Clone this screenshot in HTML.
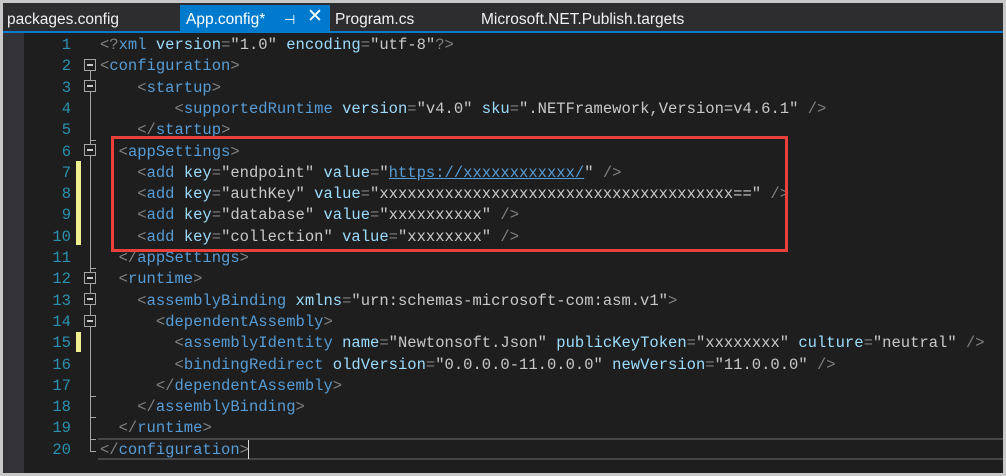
<!DOCTYPE html>
<html><head><meta charset="utf-8"><style>
*{margin:0;padding:0;box-sizing:border-box}
body{width:1006px;height:476px;background:#c8c8c8;position:relative;overflow:hidden}
#tabs{position:absolute;left:3px;top:3px;width:1000px;height:28px;background:#2d2d30}
.tab{position:absolute;top:9px;font:15.5px "Liberation Sans",sans-serif;color:#f1f1f1;line-height:22px}
#blue{position:absolute;left:3px;top:31px;width:1000px;height:2px;background:#007acc}
#act{position:absolute;left:180px;top:5px;width:150px;height:27px;background:#007acc}
#ed{position:absolute;left:3px;top:33px;width:1000px;height:440px;background:#1e1e1e}
#lb{position:absolute;left:3px;top:33px;width:21px;height:440px;background:#333337}
.ln{position:absolute;left:30px;width:41px;text-align:right;color:#2b91af;font:15.52px "Liberation Mono",monospace;height:21.3px;line-height:21.3px;margin-top:1px}
.c{position:absolute;left:100px;white-space:pre;font:15.52px "Liberation Mono",monospace;line-height:21.3px;height:21.3px;color:#c8c8c8;margin-top:1px}
.t{color:#569cd6}.a{color:#9cdcfe}.p{color:#808080}.s{color:#c8c8c8}.u{color:#569cd6;text-decoration:underline}
.fb{position:absolute;left:84px;width:12px;height:12px;border:1px solid #a5a5a5;background:#1e1e1e}
.fb::after{content:"";position:absolute;left:2px;top:4px;width:6px;height:2px;background:#c8c8c8}
.ym{position:absolute;left:76px;width:5px;background:#efef8f}
</style></head><body>
<div id="tabs"></div>
<div id="act"></div>
<div class="tab" style="left:7px">packages.config</div>
<div class="tab" style="left:186px;color:#fff">App.config*</div>
<div class="tab" style="left:284px;color:#fff;font-size:13px">⊣</div>
<div class="tab" style="left:307px;top:6px;color:#fff;font-size:19px">✕</div>
<div class="tab" style="left:335px">Program.cs</div>
<div class="tab" style="left:481px">Microsoft.NET.Publish.targets</div>
<div id="blue"></div>
<div id="ed"></div>
<div id="lb"></div>
<div style="position:absolute;left:98px;top:438px;width:905px;height:22px;border-top:2px solid #464646;border-bottom:2px solid #464646"></div>
<div style="position:absolute;left:90px;top:62px;width:1px;height:390px;background:#a5a5a5"></div>
<div style="position:absolute;left:90px;top:451px;width:6px;height:1px;background:#a5a5a5"></div>
<div style="position:absolute;left:90px;top:396px;width:6px;height:1px;background:#a5a5a5"></div>
<div style="position:absolute;left:90px;top:417px;width:6px;height:1px;background:#a5a5a5"></div>
<div style="position:absolute;left:90px;top:439px;width:6px;height:1px;background:#a5a5a5"></div>
<div style="position:absolute;left:90px;top:140px;width:6px;height:1px;background:#a5a5a5"></div>
<div style="position:absolute;left:90px;top:268px;width:6px;height:1px;background:#a5a5a5"></div>
<div class="fb" style="top:59px"></div>
<div class="fb" style="top:80px"></div>
<div class="fb" style="top:144px"></div>
<div class="fb" style="top:272px"></div>
<div class="fb" style="top:293px"></div>
<div class="fb" style="top:315px"></div>
<div class="ym" style="top:161px;height:84px"></div>
<div class="ym" style="top:332px;height:20px"></div>
<div class="ln" style="top:34px">1</div><div class="ln" style="top:55.3px">2</div><div class="ln" style="top:76.6px">3</div><div class="ln" style="top:97.9px">4</div><div class="ln" style="top:119.2px">5</div><div class="ln" style="top:140.5px">6</div><div class="ln" style="top:161.8px">7</div><div class="ln" style="top:183.1px">8</div><div class="ln" style="top:204.4px">9</div><div class="ln" style="top:225.7px">10</div><div class="ln" style="top:247px">11</div><div class="ln" style="top:268.3px">12</div><div class="ln" style="top:289.6px">13</div><div class="ln" style="top:310.9px">14</div><div class="ln" style="top:332.2px">15</div><div class="ln" style="top:353.5px">16</div><div class="ln" style="top:374.8px">17</div><div class="ln" style="top:396.1px">18</div><div class="ln" style="top:417.4px">19</div><div class="ln" style="top:438.7px">20</div>
<div class="c" style="top:34px"><span class="p">&lt;?</span><span class="t">xml</span> <span class="a">version</span><span class="p">=</span>"<span class="s">1.0</span>" <span class="a">encoding</span><span class="p">=</span>"utf-8"<span class="p">?&gt;</span></div>
<div class="c" style="top:55.3px"><span class="p">&lt;</span><span class="t">configuration</span><span class="p">&gt;</span></div>
<div class="c" style="top:76.6px">    <span class="p">&lt;</span><span class="t">startup</span><span class="p">&gt;</span></div>
<div class="c" style="top:97.9px">        <span class="p">&lt;</span><span class="t">supportedRuntime</span> <span class="a">version</span><span class="p">=</span>"v4.0" <span class="a">sku</span><span class="p">=</span>".NETFramework,Version=v4.6.1" <span class="p">/&gt;</span></div>
<div class="c" style="top:119.2px">    <span class="p">&lt;/</span><span class="t">startup</span><span class="p">&gt;</span></div>
<div class="c" style="top:140.5px">  <span class="p">&lt;</span><span class="t">appSettings</span><span class="p">&gt;</span></div>
<div class="c" style="top:161.8px">    <span class="p">&lt;</span><span class="t">add</span> <span class="a">key</span><span class="p">=</span>"endpoint" <span class="a">value</span><span class="p">=</span>"<span class="u">https://xxxxxxxxxxxx/</span>" <span class="p">/&gt;</span></div>
<div class="c" style="top:183.1px">    <span class="p">&lt;</span><span class="t">add</span> <span class="a">key</span><span class="p">=</span>"authKey" <span class="a">value</span><span class="p">=</span>"xxxxxxxxxxxxxxxxxxxxxxxxxxxxxxxxxxxxxx==" <span class="p">/&gt;</span></div>
<div class="c" style="top:204.4px">    <span class="p">&lt;</span><span class="t">add</span> <span class="a">key</span><span class="p">=</span>"database" <span class="a">value</span><span class="p">=</span>"xxxxxxxxxx" <span class="p">/&gt;</span></div>
<div class="c" style="top:225.7px">    <span class="p">&lt;</span><span class="t">add</span> <span class="a">key</span><span class="p">=</span>"collection" <span class="a">value</span><span class="p">=</span>"xxxxxxxx" <span class="p">/&gt;</span></div>
<div class="c" style="top:247px">  <span class="p">&lt;/</span><span class="t">appSettings</span><span class="p">&gt;</span></div>
<div class="c" style="top:268.3px">  <span class="p">&lt;</span><span class="t">runtime</span><span class="p">&gt;</span></div>
<div class="c" style="top:289.6px">    <span class="p">&lt;</span><span class="t">assemblyBinding</span> <span class="a">xmlns</span><span class="p">=</span>"urn:schemas-microsoft-com:asm.v1"<span class="p">&gt;</span></div>
<div class="c" style="top:310.9px">      <span class="p">&lt;</span><span class="t">dependentAssembly</span><span class="p">&gt;</span></div>
<div class="c" style="top:332.2px">        <span class="p">&lt;</span><span class="t">assemblyIdentity</span> <span class="a">name</span><span class="p">=</span>"Newtonsoft.Json" <span class="a">publicKeyToken</span><span class="p">=</span>"xxxxxxxx" <span class="a">culture</span><span class="p">=</span>"neutral" <span class="p">/&gt;</span></div>
<div class="c" style="top:353.5px">        <span class="p">&lt;</span><span class="t">bindingRedirect</span> <span class="a">oldVersion</span><span class="p">=</span>"0.0.0.0-11.0.0.0" <span class="a">newVersion</span><span class="p">=</span>"11.0.0.0" <span class="p">/&gt;</span></div>
<div class="c" style="top:374.8px">      <span class="p">&lt;/</span><span class="t">dependentAssembly</span><span class="p">&gt;</span></div>
<div class="c" style="top:396.1px">    <span class="p">&lt;/</span><span class="t">assemblyBinding</span><span class="p">&gt;</span></div>
<div class="c" style="top:417.4px">  <span class="p">&lt;/</span><span class="t">runtime</span><span class="p">&gt;</span></div>
<div class="c" style="top:438.7px"><span class="p">&lt;/</span><span class="t">configuration</span><span class="p">&gt;</span></div>
<div style="position:absolute;left:248px;top:440px;width:1px;height:19px;background:#dcdcdc"></div>
<div style="position:absolute;left:111px;top:136px;width:677px;height:116px;border:3px solid #e8413c"></div>
</body></html>
